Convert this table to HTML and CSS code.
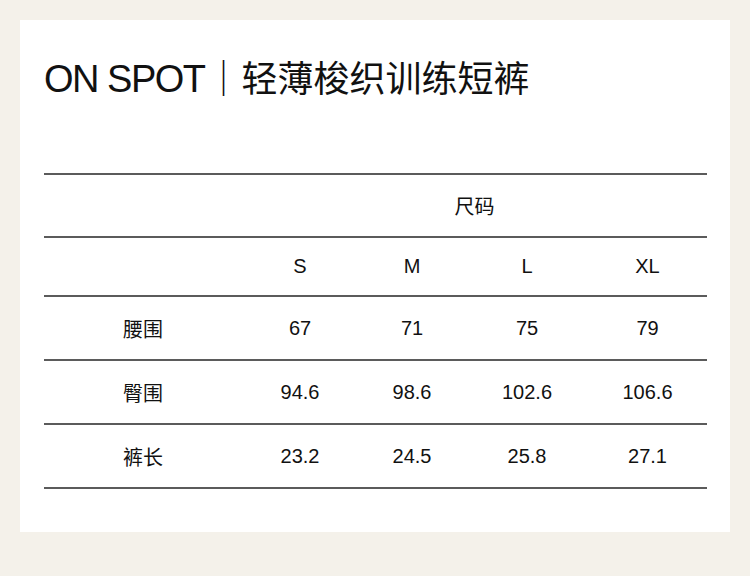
FILE: index.html
```html
<!DOCTYPE html>
<html lang="zh-CN">
<head>
<meta charset="utf-8">
<title>ON SPOT 尺码表</title>
<link rel="stylesheet" href="styles.css">
</head>
<body>
<div class="card">
  <h1 class="title">ON SPOT<span class="cjk">｜轻薄梭织训练短裤</span></h1>
  <div class="sizes">
    <div class="row row-top">
      <div class="cell span">尺码</div>
    </div>
    <div class="row row-head">
      <div class="cell"></div>
      <div class="cell">S</div>
      <div class="cell">M</div>
      <div class="cell">L</div>
      <div class="cell">XL</div>
    </div>
    <div class="row">
      <div class="cell">腰围</div>
      <div class="cell">67</div>
      <div class="cell">71</div>
      <div class="cell">75</div>
      <div class="cell">79</div>
    </div>
    <div class="row">
      <div class="cell">臀围</div>
      <div class="cell">94.6</div>
      <div class="cell">98.6</div>
      <div class="cell">102.6</div>
      <div class="cell">106.6</div>
    </div>
    <div class="row">
      <div class="cell">裤长</div>
      <div class="cell">23.2</div>
      <div class="cell">24.5</div>
      <div class="cell">25.8</div>
      <div class="cell">27.1</div>
    </div>
  </div>
</div>
</body>
</html>
```
FILE: styles.css
```css
html, body {
  margin: 0;
  padding: 0;
}
body {
  background: #f4f1ea;
  padding: 20px;
  font-family: "Liberation Sans", "Noto Sans CJK SC", sans-serif;
  color: #111;
}
.card {
  background: #fff;
  width: 710px;
  box-sizing: border-box;
  padding: 0 23px 43px 24px;
}
.title {
  margin: 0;
  padding-top: 34px;
  font-size: 38px;
  font-weight: normal;
  line-height: 44px;
  height: 44px;
  letter-spacing: -1.5px;
  white-space: nowrap;
}
.cjk {
  font-family: "Noto Sans CJK SC", sans-serif;
  font-size: 36px;
  letter-spacing: 0;
  margin-left: 1px;
}
.sizes {
  margin-top: 75px;
  border-top: 2px solid #5b5b5b;
}
.row {
  display: grid;
  grid-template-columns: 198px 116px 108px 122px 119px;
  height: 62px;
  border-bottom: 2px solid #5b5b5b;
  align-items: center;
  font-size: 20px;
}
.row-top {
  height: 61px;
}
.row-head {
  height: 57px;
}
.cell {
  text-align: center;
}
.span {
  grid-column: 2 / 6;
}
```
